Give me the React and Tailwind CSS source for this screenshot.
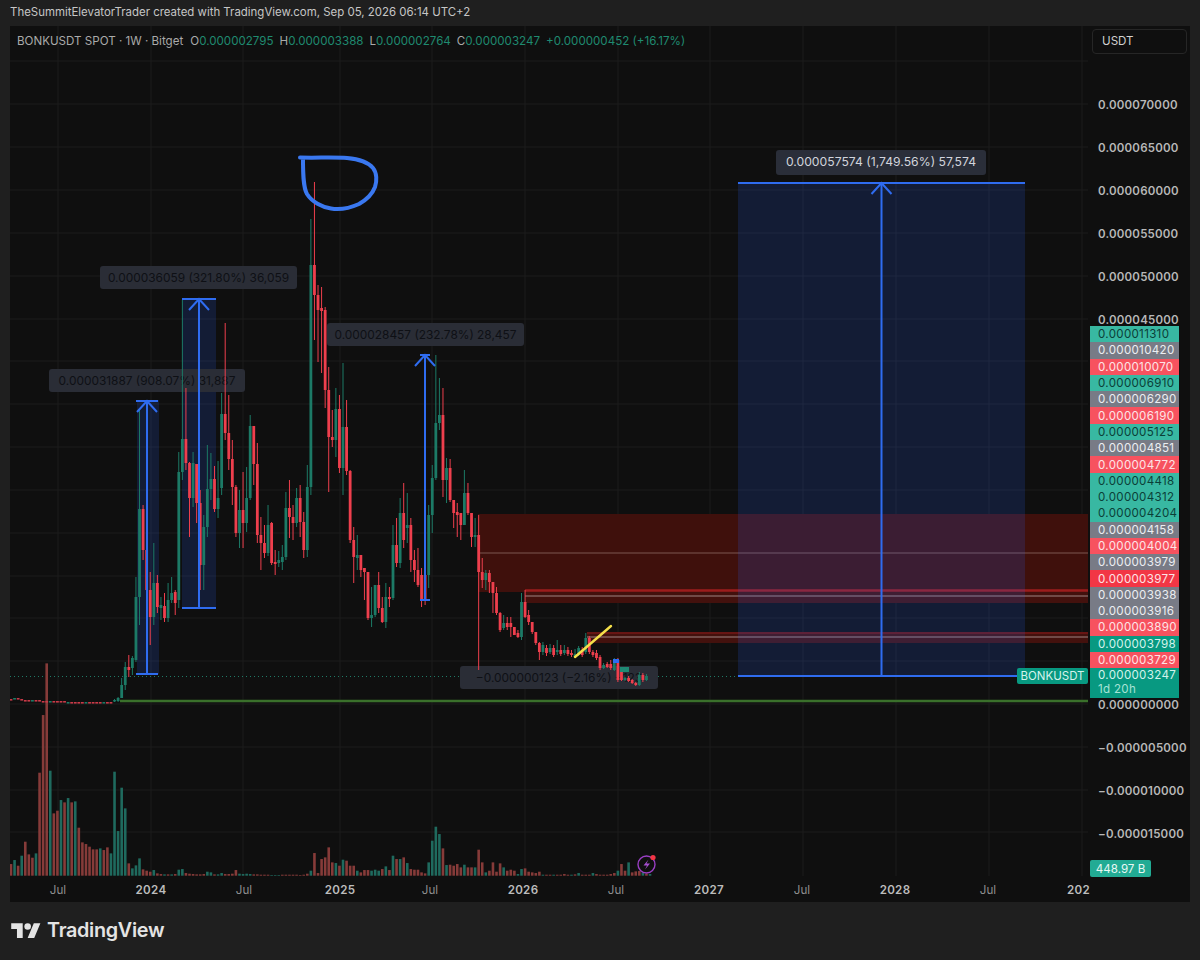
import React from "react";

// rows hidden behind the tags stay empty so the axis keeps its spacing
const PRICES = [
  "0.000070000", "0.000065000", "0.000060000", "0.000055000", "0.000050000", "0.000045000",
  "", "", "", "", "", "", "", "",
  "0.000000000", "−0.000005000", "−0.000010000", "−0.000015000",
];

const TAGS = [
  ["0.000011310", "t"], ["0.000010420", "g"], ["0.000010070", "r"], ["0.000006910", "t"],
  ["0.000006290", "g"], ["0.000006190", "r"], ["0.000005125", "t"], ["0.000004851", "g"],
  ["0.000004772", "r"], ["0.000004418", "t"], ["0.000004312", "t"], ["0.000004204", "t"],
  ["0.000004158", "g"], ["0.000004004", "r"], ["0.000003979", "g"], ["0.000003977", "s"],
  ["0.000003938", "g"], ["0.000003916", "g"], ["0.000003890", "r"], ["0.000003798", "d"],
  ["0.000003729", "r"],
];

const TAG_STYLE = {
  t: "bg-[#38b8a2] text-[#0b3f38]",
  g: "bg-[#787b86] text-[#eceef2]",
  r: "bg-[#f7525f] text-[#fde4e6]",
  s: "bg-[#f23645] text-[#fde4e6]",
  d: "bg-[#089981] text-[#d4f3ec]",
};

const TICKS = [
  ["Jul", ""], ["2024", "y"], ["Jul", ""], ["2025", "s"], ["Jul", ""], ["2026", "y"],
  ["Jul", ""], ["2027", "y"], ["Jul", ""], ["2028", "y"], ["Jul", ""],
];

const GRID_X = [58, 151, 243, 340, 432, 525, 618, 710, 803, 896, 989, 1082];
const GRID_Y = [61, 104, 147, 190, 233, 276, 319, 361, 404, 447, 490, 533, 576, 618, 661, 704, 747, 790, 832];

const FLAT = [699, 698, 698, 699, 700, 700, 700, 700, 700, 701, 701, 701, 701, 701, 701, 701, 702, 702, 702, 702, 702, 702, 702, 702, 702, 702, 702, 702, 702];

// [green, bodyTop, bodyBottom, high, low], from i = 29 on
const CANDLES = [
  [1,700,701,699,702],[1,698,701,697,702],[1,685,698,678,698],[1,667,685,662,690],[0,667,670,655,677],[1,658,668,656,675],
  [1,597,660,577,662],[1,509,597,410,625],[0,509,550,505,560],[0,550,590,545,592],[0,590,617,572,645],[1,583,617,543,625],
  [0,583,607,575,613],[1,605,608,597,620],[0,606,618,593,622],[1,600,618,583,622],[1,593,600,577,603],[0,592,603,590,615],
  [1,472,600,452,608],[1,439,472,300,480],[0,439,463,388,470],[0,463,498,462,537],[1,463,498,452,507],[0,464,503,464,523],
  [0,503,565,490,590],[1,527,565,515,590],[1,489,527,445,537],[1,479,489,453,500],[0,479,509,466,512],[1,498,509,461,518],
  [1,414,488,393,495],[0,414,433,323,440],[0,433,459,395,470],[0,459,487,440,505],[0,487,533,485,537],[1,510,533,490,548],
  [0,510,523,472,548],[1,498,523,467,532],[1,426,498,415,500],[0,426,464,426,485],[0,464,535,443,543],[0,535,543,517,570],
  [0,543,553,525,558],[1,525,553,505,556],[0,523,563,522,565],[0,562,564,550,575],[1,560,563,551,567],[1,557,562,545,570],
  [1,508,557,492,560],[0,508,517,480,538],[0,517,523,505,540],[1,498,523,488,527],[0,498,522,485,537],[0,522,550,512,558],
  [1,487,550,465,557],[1,265,487,219,495],[0,265,295,182,340],[0,295,310,285,362],[0,308,311,287,373],[0,310,390,307,408],
  [0,390,437,367,492],[0,437,440,410,447],[1,409,440,388,457],[0,409,468,395,473],[1,427,468,363,495],[0,427,471,400,475],
  [0,471,540,470,543],[0,540,557,527,583],[1,555,558,535,570],[0,555,570,555,577],[0,568,572,569,600],[0,572,618,572,620],
  [1,615,618,587,627],[1,585,615,585,617],[0,585,608,572,613],[0,608,622,597,623],[1,597,622,583,628],[0,597,599,587,607],
  [1,545,598,525,600],[0,545,563,518,567],[1,513,563,498,568],[0,513,540,483,548],[1,525,528,493,543],[0,525,560,518,572],
  [0,560,570,550,582],[0,570,585,548,587],[0,575,600,568,607],[0,575,600,570,605],[1,515,575,505,588],[1,478,515,465,533],
  [1,423,478,355,480],[1,415,423,378,430],[0,415,480,388,497],[1,468,480,458,503],[0,468,500,459,502],[0,500,513,500,528],
  [0,512,515,503,537],[0,513,525,513,540],[1,493,525,470,525],[0,493,513,483,515],[0,513,537,513,547],[1,535,537,518,547],
  [0,535,572,515,670],[0,572,580,558,588],[1,573,580,570,590],[0,573,582,570,593],[0,582,593,582,613],[0,593,613,587,615],
  [0,613,630,612,632],[1,623,628,615,630],[0,623,627,617,630],[0,623,627,617,637],[0,627,635,627,635],[0,633,637,630,638],
  [1,602,637,593,640],[0,602,617,590,618],[0,615,622,610,625],[0,622,632,622,634],[0,632,643,632,645],[0,643,652,642,660],
  [1,645,652,642,655],[0,648,653,645,656],[1,648,652,644,654],[0,648,655,645,657],[1,650,652,640,655],[0,650,654,645,656],
  [1,650,653,645,655],[0,650,654,647,656],[0,653,655,650,657],[1,654,657,649,657],[1,648,655,646,656],[0,650,655,647,657],
  [1,638,652,633,654],[0,638,652,636,654],[0,652,655,650,657],[0,653,658,650,660],[0,657,668,655,670],[1,665,668,663,669],
  [0,664,667,662,668],[0,664,668,660,670],[1,660,670,658,671],[0,660,680,658,682],[0,670,680,668,681],[1,678,680,677,681],
  [0,678,681,676,682],[0,680,683,679,684],[0,683,685,682,686],[1,675,685,672,686],[0,675,680,673,682],[1,676,680,674,681],
];

// thirds of a pixel, negative is a green bar
const VOLUME = [
  35,-47,30,-60,102,64,54,-67,309,482,637,-315,187,195,-227,220,-233,220,-223,144,100,95,87,79,79,-82,77,85,-67,-312,
  -134,-264,-202,37,-22,-31,-52,19,15,12,-17,7,5,-4,4,-4,5,-18,-20,8,6,5,4,4,5,-12,-10,4,-4,-8,5,5,6,17,-6,-5,-6,-5,4,4,
  3,3,3,-2,-2,-2,3,3,3,3,3,2,3,6,-15,68,8,50,55,85,40,-38,30,-48,45,30,30,-15,10,17,17,-15,-18,-15,20,-28,17,-60,50,-50,
  55,-38,20,18,18,10,7,-40,-105,-147,-125,82,-32,33,30,35,25,-33,25,25,-25,78,40,-10,15,40,12,37,-25,15,18,15,-5,-20,22,12,10,8,
  12,-3,3,3,-3,3,3,5,3,-3,4,-8,3,3,3,-8,5,3,3,3,5,8,-15,35,15,-40,10,13,14,-10,6,-5,
];

const barX = (i) => 11 + 3.57 * i;

function Candle({ i, c }) {
  const [green, top, bottom, high, low] = c;
  const color = green ? "#1c7a66" : "#ee3f4d";
  const x = barX(i);
  return (
    <g>
      <line x1={x} x2={x} y1={high} y2={low} stroke={color} strokeWidth="1" />
      <rect x={x - 1.4} y={top} width="2.8" height={Math.max(bottom - top, 1.5)} fill={color} />
    </g>
  );
}

function Measure({ x, top, bottom, half }) {
  return (
    <g stroke="#2f6cf0" strokeWidth="2" fill="none">
      <line x1={x} x2={x} y1={top} y2={bottom} />
      <line x1={x - half} x2={x + half} y1={top} y2={top} />
      <line x1={x - half} x2={x + half} y1={bottom} y2={bottom} />
      <path d={`M${x - 10} ${top + 11}L${x} ${top}L${x + 10} ${top + 11}`} />
    </g>
  );
}

function ChartLabel({ className, children }) {
  return (
    <div className={`absolute flex h-[23px] items-center justify-center whitespace-nowrap rounded-[3px] bg-[#2a2d36] text-[11.9px] text-[#0e1015] ${className}`}>
      {children}
    </div>
  );
}

function Logo() {
  return (
    <svg viewBox="0 0 36 28" className="h-[23px] w-[30px]" fill="#e4e4e4">
      <path d="M14 22H7V11H0V4h14v18zM28 22h-8l7.5-18h8L28 22z" />
      <circle cx="20" cy="8" r="4" />
    </svg>
  );
}

export default function App() {
  return (
    <div className="flex h-[960px] w-[1200px] flex-col bg-[#1f1f1f] font-['Inter',sans-serif]">
      <div className="flex h-[26px] items-center px-[10px] text-[11.45px] text-[#c6c6c6]">
        TheSummitElevatorTrader created with TradingView.com, Sep 05, 2026 06:14 UTC+2
      </div>

      <div className="mx-[10px] flex h-[876px] flex-col bg-[#0f0f0f]">
        <div className="flex h-[850px]">
          {/* plot */}
          <div className="relative h-full w-[1078px] overflow-hidden">
            <svg className="absolute inset-0" width="1078" height="850" viewBox="10 26 1078 850">
              {GRID_X.map((x) => (
                <line key={x} x1={x} x2={x} y1="26" y2="876" stroke="#1c1c1c" />
              ))}
              {GRID_Y.map((y) => (
                <line key={y} x1="10" x2="1088" y1={y} y2={y} stroke="#1c1c1c" />
              ))}
              <rect x="478" y="514" width="610" height="78" fill="#3f100c" />
              <rect x="525" y="589" width="563" height="14" fill="#43110d" />
              <rect x="587" y="632" width="501" height="11" fill="#43110d" />
              <line x1="478" x2="1088" y1="553" y2="553" stroke="#7d5650" />
              <line x1="525" x2="1088" y1="590.5" y2="590.5" stroke="#9c1c1c" strokeWidth="2.5" />
              <line x1="525" x2="1088" y1="596" y2="596" stroke="#a08482" />
              <line x1="587" x2="1088" y1="633" y2="633" stroke="#8c1a1a" />
              <line x1="587" x2="1088" y1="637" y2="637" stroke="#a08482" />
              <rect x="738" y="183" width="287" height="493" fill="#2962ff" fillOpacity="0.16" />
              <rect x="137" y="400" width="22" height="274" fill="#2962ff" fillOpacity="0.16" />
              <rect x="182" y="299" width="34" height="309" fill="#2962ff" fillOpacity="0.16" />
              <line x1="120" x2="1088" y1="701" y2="701" stroke="#3a702b" strokeWidth="2.4" />
              <line x1="10" x2="1088" y1="676.5" y2="676.5" stroke="#1f7a66" strokeDasharray="1 3" />
            </svg>

            <ChartLabel className="left-[39px] top-[343px] w-[196px]">0.000031887 (908.07%) 31,887</ChartLabel>
            <ChartLabel className="left-[90px] top-[240px] w-[197px]">0.000036059 (321.80%) 36,059</ChartLabel>
            <ChartLabel className="left-[317px] top-[297px] w-[197px]">0.000028457 (232.78%) 28,457</ChartLabel>
            <ChartLabel className="left-[450px] top-[640px] w-[198px]">−0.000000123 (−2.16%) −123</ChartLabel>
            <ChartLabel className="left-[766px] top-[124px] h-[25px] w-[210px] bg-[#2a2e39] text-[12.2px] text-[#d1d4dc]">0.000057574 (1,749.56%) 57,574</ChartLabel>

            <svg className="absolute inset-0" width="1078" height="850" viewBox="10 26 1078 850">
              {VOLUME.map((v, i) => (
                <rect
                  key={i}
                  x={barX(i) - 1.3}
                  y={875.7 - Math.abs(v) / 3}
                  width="2.6"
                  height={Math.abs(v) / 3}
                  fill={v < 0 ? "#1f6a5e" : "#863b39"}
                />
              ))}
              {FLAT.map((y, i) => (
                <rect key={i} x={barX(i) - 1.4} y={y} width="2.8" height="1.6" fill={i % 5 === 1 ? "#1c7a66" : "#c93a48"} />
              ))}
              {CANDLES.map((c, i) => (
                <Candle key={i} i={i + 29} c={c} />
              ))}
              <rect x="613" y="659" width="6" height="4" fill="#2f6cf0" />
              <rect x="620" y="667" width="9" height="5" fill="#1f8a74" />
              <Measure x={147} top={401} bottom={674} half={11} />
              <Measure x={199} top={299} bottom={608} half={17} />
              <Measure x={425} top={355} bottom={600} half={5} />
              <line x1="738" x2="1025" y1="183" y2="183" stroke="#2f6cf0" strokeWidth="2" />
              <line x1="738" x2="1025" y1="676" y2="676" stroke="#2f6cf0" strokeWidth="2" />
              <line x1="881.5" x2="881.5" y1="183" y2="676" stroke="#2f6cf0" strokeWidth="2" />
              <path d="M871.5 194L881.5 183L891.5 194" stroke="#2f6cf0" strokeWidth="2" fill="none" />
              <path
                d="M300 157.5C315 158 335 157 347 158C358 159 368 162 373 168C377 173 377 181 375 187C372 195 366 200 359 204C350 208 340 210 331 208.5C322 207 312 202 307 194C303 187 303 172 303 159"
                stroke="#3a78f0"
                strokeWidth="4"
                strokeLinecap="round"
                fill="none"
              />
              <line x1="575" x2="611" y1="657" y2="626" stroke="#f5e04a" strokeWidth="2.4" strokeLinecap="round" />
              <g fill="none">
                <circle cx="646.5" cy="864.5" r="8.5" stroke="#9a3fc4" strokeWidth="1.4" />
                <path d="M648.5 859.5L643.5 865.5H647L645 869.5L650 863.5H646.5Z" fill="#a64fd0" />
                <circle cx="653" cy="857.5" r="2.6" fill="#f23645" />
              </g>
            </svg>

            {/* legend */}
            <div className="absolute left-[7px] top-[7px] flex gap-[6px] whitespace-nowrap text-[11.6px] text-[#aaaaaa]">
              <span className="mr-[1px]">BONKUSDT SPOT · 1W · Bitget</span>
              <span>O<span className="text-[#1f8a70]">0.000002795</span></span>
              <span>H<span className="text-[#1f8a70]">0.000003388</span></span>
              <span>L<span className="text-[#1f8a70]">0.000002764</span></span>
              <span>C<span className="text-[#1f8a70]">0.000003247</span></span>
              <span className="text-[#1f8a70]">+0.000000452 (+16.17%)</span>
            </div>

            <div className="absolute left-[1007px] top-[642px] flex h-[16px] w-[71px] items-center justify-center rounded-[2px] bg-[#089981] text-[11.5px] leading-[16px] text-[#d4f3ec]">
              BONKUSDT
            </div>
          </div>

          {/* price axis */}
          <div className="relative flex h-full w-[102px] flex-col pt-[3px]">
            <div className="ml-[4px] flex h-[25px] w-[95px] items-center rounded-[4px] border border-[#262626] pl-[9px] text-[11.6px] text-[#d0d0d0]">
              USDT
            </div>
            <div className="mt-[30.5px] flex flex-col">
              {PRICES.map((p, i) => (
                <div key={i} className="flex h-[42.86px] items-center pl-[10px] text-[11.5px] font-semibold tracking-[0.2px] text-[#b8b8b8]">
                  {p}
                </div>
              ))}
            </div>

            <div className="absolute left-[2px] top-[300px] flex w-[89px] flex-col">
              {TAGS.map(([v, s]) => (
                <div key={v} className={`flex h-[16.3px] items-center pl-[8px] text-[11.6px] leading-[16px] tracking-[0.3px] ${TAG_STYLE[s]}`}>
                  {v}
                </div>
              ))}
              <div className="flex h-[29.4px] flex-col justify-center bg-[#089981] pl-[8px] text-[11.6px] leading-[13.5px] tracking-[0.3px] text-[#d4f3ec]">
                <span>0.000003247</span>
                <span className="text-[#a6e3d6]">1d 20h</span>
              </div>
            </div>

            <div className="absolute bottom-[-1px] left-[2px] flex h-[17px] w-[61px] items-center justify-center rounded-[2px] bg-[#22ab94] text-[11.6px] leading-[16px] text-[#e8f8f4]">
              448.97 B
            </div>
          </div>
        </div>

        {/* time axis */}
        <div className="flex h-[26px] items-center pl-[1.5px] pt-[4px]">
          {TICKS.map(([t, kind], i) => (
            <div
              key={i}
              className={`w-[93px] shrink-0 text-center text-[11.6px] ${kind ? "font-semibold tracking-[0.3px] text-[#bcbcbc]" : "text-[#8e8e8e]"} ${kind === "s" ? "ml-[3px] -mr-[3px]" : ""}`}
            >
              {t}
            </div>
          ))}
          <div className="ml-[32.5px] text-[11.6px] font-semibold tracking-[0.3px] text-[#bcbcbc]">202</div>
        </div>
      </div>

      <div className="flex flex-1 items-center gap-[6px] pl-[11px]">
        <Logo />
        <span className="text-[19.8px] font-semibold tracking-[-0.3px] text-[#e4e4e4]">TradingView</span>
      </div>
    </div>
  );
}
